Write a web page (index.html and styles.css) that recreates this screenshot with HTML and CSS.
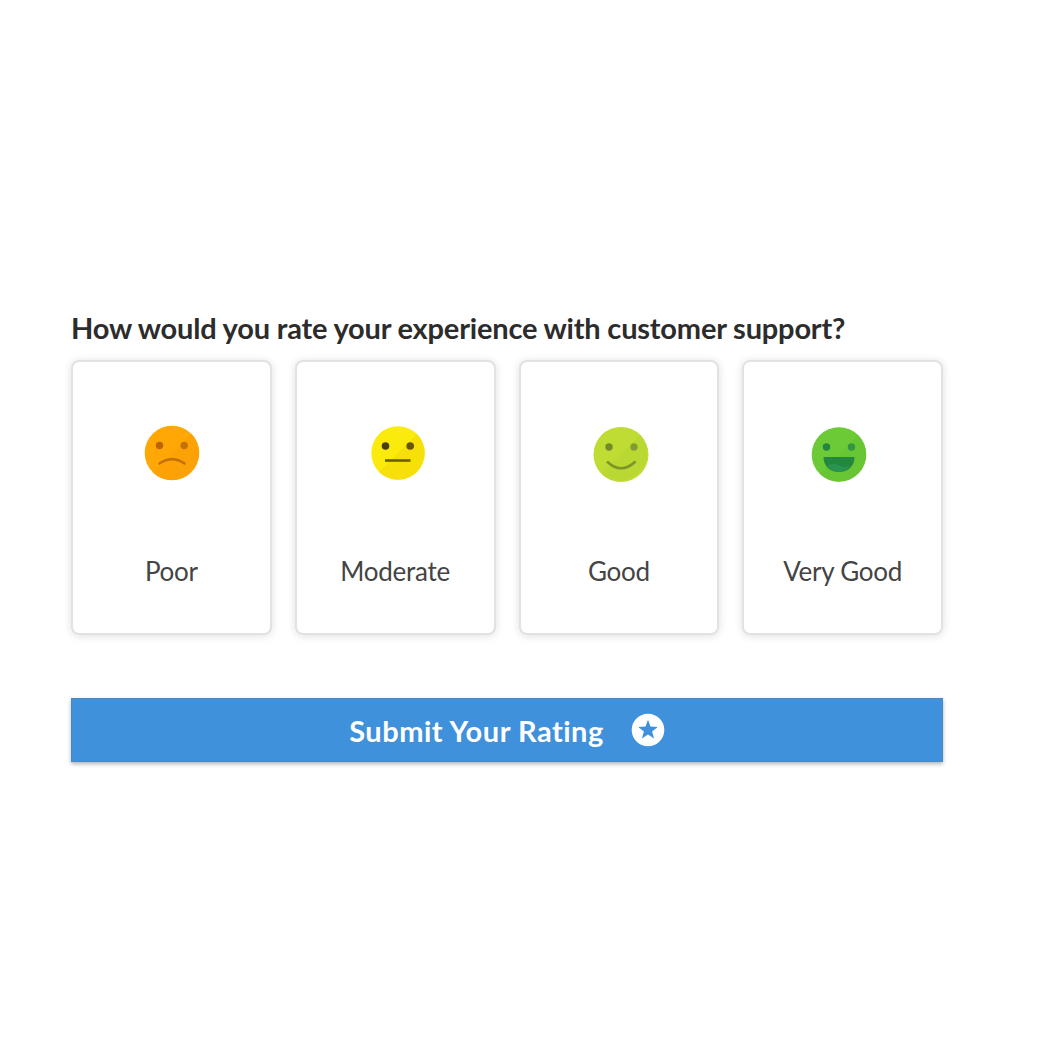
FILE: index.html
```html
<!doctype html>
<html lang="en">

<head>
  <meta charset="utf-8">
  <meta name="viewport" content="width=device-width, initial-scale=1">
  <title>Rate Customer Support</title>
  <link rel="stylesheet" href="styles.css">
</head>

<body>
  <main class="rating">
    <h1 class="question">How would you rate your experience with customer support?</h1>

    <div class="cards">
      <div class="card">
        <svg class="face face-poor" viewBox="0 0 56 56">
          <circle cx="28" cy="28" r="27.300" fill="#ffa805"/>
          <path d="M47.300 8.700a27.300 27.300 0 0 1-38.600 38.600z" fill="#fda206"/>
          <circle cx="15.500" cy="20.500" r="3.700" fill="#b96504"/>
          <circle cx="40.200" cy="20.500" r="3.700" fill="#c57204"/>
          <path d="M15.500 38.500Q28 30 40.500 38.500" fill="none" stroke="#c46f04" stroke-width="2.500" stroke-linecap="round"/>
        </svg>
        <span class="label">Poor</span>
      </div>
      <div class="card">
        <svg class="face face-moderate" viewBox="0 0 56 56">
          <circle cx="28" cy="28" r="26.700" fill="#faeb0c"/>
          <path d="M46.900 9.100a26.700 26.700 0 0 1-37.800 37.800z" fill="#f7df0a"/>
          <circle cx="15.500" cy="21" r="3.800" fill="#4b3d08"/>
          <circle cx="40.200" cy="21" r="3.800" fill="#655309"/>
          <path d="M15 35.500H40.500" fill="none" stroke="#6d5b09" stroke-width="2.600"/>
        </svg>
        <span class="label">Moderate</span>
      </div>
      <div class="card">
        <svg class="face face-good" viewBox="0 0 56 56">
          <circle cx="28" cy="28.500" r="27.500" fill="#bfdc35"/>
          <path d="M47.400 9.100a27.500 27.500 0 0 1-38.800 38.800z" fill="#bad832"/>
          <circle cx="16" cy="21" r="3.700" fill="#728a28"/>
          <circle cx="41" cy="21" r="3.700" fill="#829c34"/>
          <path d="M14 35.500Q28 49 42.500 35.500" fill="none" stroke="#7e9428" stroke-width="2.500"/>
        </svg>
        <span class="label">Good</span>
      </div>
      <div class="card">
        <svg class="face face-very-good" viewBox="0 0 56 56">
          <circle cx="28" cy="28.500" r="27.300" fill="#6bca35"/>
          <path d="M47.300 9.200a27.300 27.300 0 0 1-38.600 38.600z" fill="#68c634"/>
          <circle cx="15.500" cy="21" r="3.700" fill="#238640"/>
          <circle cx="40.500" cy="21" r="3.700" fill="#359444"/>
          <path d="M12.500 31h31c0 9-6.500 15-15.500 15s-15.500-6-15.500-15z" fill="#22873f"/>
          <path d="M16.500 40c4-3 8-3 12-.5 4 2 7 1 11 .5-3 3.800-7 6-11.500 6s-9-2.200-11.500-6z" fill="#2b9350"/>
        </svg>
        <span class="label">Very Good</span>
      </div>
    </div>

    <button class="submit" type="button">
      Submit Your Rating
      <svg class="star" viewBox="0 0 34 34">
        <circle cx="17" cy="17" r="16.300" fill="#fff"/>
        <path d="M17 6.800l2.500 6.800 7.300.3-5.700 4.500 2 7-6.100-4-6.100 4 2-7-5.700-4.500 7.300-.3z" fill="#3f91dc"/>
      </svg>
    </button>
  </main>
</body>
</html>
```

FILE: styles.css
```css
* {
  box-sizing: border-box;
}

body {
  min-height: 100vh;
  margin: 0;
  padding: 309px 0 0 71px;
  background-color: #fff;
  font-family: Lato, "Liberation Sans", sans-serif;
}

.rating {
  width: 872px;
}

.question {
  margin: 0;
  color: #2c2c2c;
  font-size: 29px;
  font-weight: 700;
  line-height: 38px;
  letter-spacing: -.19px;
  white-space: nowrap;
}

.cards {
  display: grid;
  grid-template-columns: repeat(4, 1fr);
  gap: 23px;
  margin-top: 13px;
}

.card {
  display: flex;
  flex-direction: column;
  align-items: center;
  height: 275px;
  padding-top: 63px;
  border: 2px solid #e2e2e2;
  border-radius: 8px;
  background-color: #fff;
  box-shadow: 0 1px 8px rgba(0, 0, 0, .13);
}

.face {
  width: 56px;
  height: 56px;
  margin-bottom: 74px;
}

/* the faces are not quite centred in their cards */
.face-poor {
  margin-left: 1px;
}

.face-moderate {
  margin-left: 6px;
}

.face-good {
  margin-top: 1px;
  margin-bottom: 73px;
  margin-left: 4px;
}

.face-very-good {
  margin-top: 1px;
  margin-bottom: 73px;
  margin-right: 8px;
}

.label {
  color: #444;
  font-size: 26px;
  line-height: 32px;
  letter-spacing: -.25px;
}

.submit {
  display: flex;
  align-items: center;
  justify-content: center;
  gap: 27px;
  width: 100%;
  height: 64px;
  margin-top: 63px;
  padding: 0;
  border: 1px solid #4a89c4;
  background-color: #3f91dc;
  box-shadow: 0 2px 4px rgba(0, 0, 0, .3);
  color: #fff;
  font-family: inherit;
  font-size: 29px;
  font-weight: 700;
  letter-spacing: .52px;
}

.star {
  width: 34px;
  height: 34px;
}
```
